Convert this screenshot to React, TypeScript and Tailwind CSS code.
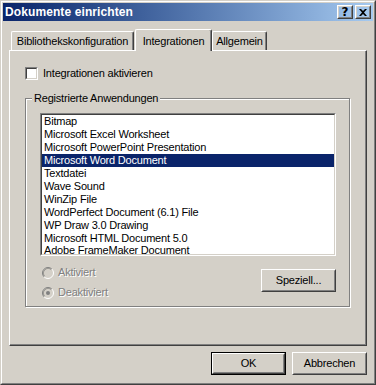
import React from "react";

const items = [
  "Bitmap",
  "Microsoft Excel Worksheet",
  "Microsoft PowerPoint Presentation",
  "Microsoft Word Document",
  "Textdatei",
  "Wave Sound",
  "WinZip File",
  "WordPerfect Document (6.1) File",
  "WP Draw 3.0 Drawing",
  "Microsoft HTML Document 5.0",
  "Adobe FrameMaker Document",
];

function Radio({ checked }: { checked: boolean }) {
  return (
    <svg width="12" height="12" viewBox="0 0 12 12" className="shrink-0">
      <circle cx="6" cy="6" r="5" fill="#d4d0c8" />
      <path d="M2.11 9.89 A5.5 5.5 0 0 1 9.89 2.11" fill="none" stroke="#808080" strokeWidth="1" />
      <path d="M9.89 2.11 A5.5 5.5 0 0 1 2.11 9.89" fill="none" stroke="#ffffff" strokeWidth="1" />
      <path d="M2.82 9.18 A4.5 4.5 0 0 1 9.18 2.82" fill="none" stroke="#404040" strokeWidth="1" strokeOpacity="0.35" />
      {checked && <circle cx="6" cy="6" r="2" fill="#808080" />}
    </svg>
  );
}

function RaisedButton({
  children,
  isDefault,
  className,
}: {
  children: React.ReactNode;
  isDefault?: boolean;
  className?: string;
}) {
  const inner = (
    <div className="flex-1 flex border border-t-white border-l-white border-r-[#404040] border-b-[#404040]">
      <div className="flex-1 flex items-center justify-center border border-t-[#d4d0c8] border-l-[#d4d0c8] border-r-[#808080] border-b-[#808080] text-black">
        {children}
      </div>
    </div>
  );
  if (isDefault) {
    return (
      <div className={"flex border border-black " + (className ?? "")}>{inner}</div>
    );
  }
  return <div className={"flex " + (className ?? "")}>{inner}</div>;
}

export default function App() {
  return (
    <div className="w-[376px] h-[385px] bg-[#d4d0c8] font-['Liberation_Sans',Arial,sans-serif] text-[11px] tracking-[-0.2px] text-black select-none flex border border-t-[#d4d0c8] border-l-[#d4d0c8] border-r-[#404040] border-b-[#404040]">
      <div className="flex-1 flex flex-col border border-t-white border-l-white border-r-[#808080] border-b-[#808080] p-px">
        {/* Title bar */}
        <div className="h-[18px] flex items-center bg-gradient-to-r from-[#0a246a] to-[#a6caf0] pl-[2px] pr-[2px]">
          <span className="text-white font-bold text-[12px] leading-none tracking-[0.1px]">Dokumente einrichten</span>
          <div className="ml-auto flex gap-[2px]">
            <RaisedButton className="w-[16px] h-[14px]">
              <span className="font-bold text-[12px] leading-none font-['DejaVu_Sans',sans-serif] -mt-px">?</span>
            </RaisedButton>
            <RaisedButton className="w-[16px] h-[14px]">
              <svg width="8" height="7" viewBox="0 0 8 7">
                <path d="M0 0 L2 0 L4 2 L6 0 L8 0 L5 3.5 L8 7 L6 7 L4 5 L2 7 L0 7 L3 3.5 Z" fill="#000" />
              </svg>
            </RaisedButton>
          </div>
        </div>

        {/* Tabs */}
        <div className="mt-[8px] h-[21px] flex items-end pl-[8px]">
          <div className="w-[123px] h-[19px] flex items-center justify-center border-l border-t border-white rounded-tl-[2px] shadow-[inset_-1px_0_#808080] border-r border-r-[#404040] rounded-tr-[2px] mr-[1px]">
            <span className="mt-[1px]">Bibliothekskonfiguration</span>
          </div>
          <div className="relative z-10 w-[77px] h-[22px] -mb-px flex items-start justify-center pt-[3px] bg-[#d4d0c8] border-l border-t border-white rounded-tl-[2px] border-r border-r-[#404040] shadow-[inset_-1px_0_#808080] rounded-tr-[2px]">
            <span>Integrationen</span>
          </div>
          <div className="w-[55px] h-[19px] flex items-center justify-center border-l border-t border-white rounded-tl-[2px] border-r border-r-[#404040] shadow-[inset_-1px_0_#808080] rounded-tr-[2px]">
            <span className="mt-[1px]">Allgemein</span>
          </div>
        </div>

        {/* Panel */}
        <div className="mx-[6px] h-[296px] flex flex-col border border-t-white border-l-white border-r-[#404040] border-b-[#404040] shadow-[inset_-1px_-1px_#808080] pl-[15px] pt-[16px]">
          <div className="flex items-center h-[13px]">
            <div className="w-[13px] h-[13px] flex border border-t-[#808080] border-l-[#808080] border-r-white border-b-white">
              <div className="flex-1 bg-white border border-t-[#404040] border-l-[#404040] border-r-[#d4d0c8] border-b-[#d4d0c8]" />
            </div>
            <span className="ml-[5px]">Integrationen aktivieren</span>
          </div>

          {/* Group box */}
          <div className="relative mt-[18px] w-[325px] h-[209px] border border-[#808080] shadow-[inset_1px_1px_0_#fff,1px_1px_0_#fff] pt-[14px] pl-[14px] pr-[13px] flex flex-col">
            <span className="absolute left-[6px] top-[-7px] px-[2px] bg-[#d4d0c8] leading-[13px]">
              Registrierte Anwendungen
            </span>
            {/* list box */}
            <div className="w-[296px] h-[143px] flex border border-t-[#808080] border-l-[#808080] border-r-white border-b-white">
              <div className="flex-1 bg-white border border-t-[#404040] border-l-[#404040] border-r-[#d4d0c8] border-b-[#d4d0c8] overflow-hidden">
                {items.map((it, i) => (
                  <div
                    key={it}
                    className={
                      "pl-[2px] whitespace-nowrap " +
                      (i >= 9 ? "h-[12px] leading-[12px] " : "h-[13px] leading-[13px] ") +
                      (i === 3 ? "bg-[#0a246a] text-white" : "text-black")
                    }
                  >
                    {it}
                  </div>
                ))}
              </div>
            </div>
            <div className="flex justify-between mt-[10px] w-[296px]">
              <div className="flex flex-col gap-[7px] pl-[2px] text-[#808080] [text-shadow:1px_1px_0_#fff]">
                <div className="flex items-center h-[13px]">
                  <Radio checked={false} />
                  <span className="ml-[4px]">Aktiviert</span>
                </div>
                <div className="flex items-center h-[13px]">
                  <Radio checked={true} />
                  <span className="ml-[4px]">Deaktiviert</span>
                </div>
              </div>
              <RaisedButton className="mt-[3px] w-[75px] h-[23px]">Speziell...</RaisedButton>
            </div>
          </div>
        </div>

        {/* Bottom buttons */}
        <div className="mt-[6px] flex justify-end gap-[6px] pr-[6px]">
          <RaisedButton isDefault className="w-[75px] h-[23px]">OK</RaisedButton>
          <RaisedButton className="w-[75px] h-[23px]">Abbrechen</RaisedButton>
        </div>
      </div>
    </div>
  );
}
